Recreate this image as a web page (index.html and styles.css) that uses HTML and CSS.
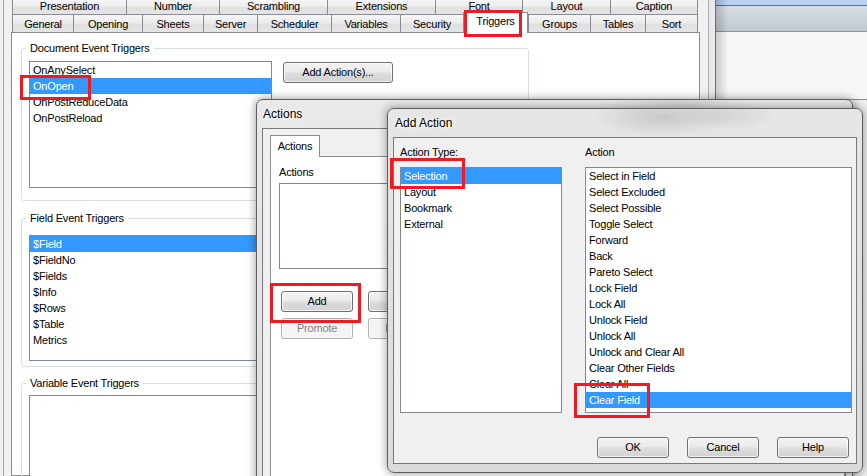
FILE: index.html
```html
<!DOCTYPE html>
<html>
<head>
<meta charset="utf-8">
<title>Triggers</title>
<link rel="stylesheet" href="styles.css">
</head>
<body>
<div class="desk">

  <div class="bgwin">
    <div class="bgwin-top"></div>
    <div class="bgwin-bar"></div>
    <div class="bgwin-body"></div>
  </div>

  <div class="props">
    <div class="tabrow row1">
      <div class="tab">Presentation</div>
      <div class="tab">Number</div>
      <div class="tab">Scrambling</div>
      <div class="tab">Extensions</div>
      <div class="tab">Font</div>
      <div class="tab">Layout</div>
      <div class="tab">Caption</div>
    </div>
    <div class="tabrow row2">
      <div class="tab">General</div>
      <div class="tab">Opening</div>
      <div class="tab">Sheets</div>
      <div class="tab">Server</div>
      <div class="tab">Scheduler</div>
      <div class="tab">Variables</div>
      <div class="tab">Security</div>
      <div class="tab sel">Triggers</div>
      <div class="tab">Groups</div>
      <div class="tab">Tables</div>
      <div class="tab">Sort</div>
    </div>
    <div class="page">
      <fieldset class="grp grp-doc">
        <legend>Document Event Triggers</legend>
        <div class="grp-row">
          <div class="list list-doc">
            <div>OnAnySelect</div>
            <div class="on">OnOpen</div>
            <div>OnPostReduceData</div>
            <div>OnPostReload</div>
          </div>
          <div class="btn btn-addactions">Add Action(s)...</div>
        </div>
      </fieldset>
      <fieldset class="grp grp-field">
        <legend>Field Event Triggers</legend>
        <div class="list list-field">
          <div class="on">$Field</div>
          <div>$FieldNo</div>
          <div>$Fields</div>
          <div>$Info</div>
          <div>$Rows</div>
          <div>$Table</div>
          <div>Metrics</div>
        </div>
      </fieldset>
      <fieldset class="grp grp-var">
        <legend>Variable Event Triggers</legend>
        <div class="list list-var"></div>
      </fieldset>
    </div>
  </div>

  <div class="win win-actions">
    <div class="wtitle">Actions</div>
    <div class="client client-actions">
      <div class="atab">Actions</div>
      <div class="apanel">
        <div class="lbl">Actions</div>
        <div class="list list-actions"></div>
        <div class="brow brow-first">
          <div class="btn abtn">Add</div>
          <div class="btn abtn">Delete</div>
        </div>
        <div class="brow">
          <div class="btn abtn dis">Promote</div>
          <div class="btn abtn dis">Demote</div>
        </div>
      </div>
    </div>
  </div>

  <div class="win win-add">
    <div class="wtitle">Add Action</div>
    <div class="client client-add">
      <div class="aa-cols">
        <div class="aa-col aa-type">
          <div class="lbl">Action Type:</div>
          <div class="list list-type">
            <div class="on">Selection</div>
            <div>Layout</div>
            <div>Bookmark</div>
            <div>External</div>
          </div>
        </div>
        <div class="aa-col aa-act">
          <div class="lbl">Action</div>
          <div class="list list-act">
            <div>Select in Field</div>
            <div>Select Excluded</div>
            <div>Select Possible</div>
            <div>Toggle Select</div>
            <div>Forward</div>
            <div>Back</div>
            <div>Pareto Select</div>
            <div>Lock Field</div>
            <div>Lock All</div>
            <div>Unlock Field</div>
            <div>Unlock All</div>
            <div>Unlock and Clear All</div>
            <div>Clear Other Fields</div>
            <div>Clear All</div>
            <div class="on">Clear Field</div>
          </div>
        </div>
      </div>
      <div class="aa-btns">
        <div class="btn dbtn">OK</div>
        <div class="btn dbtn">Cancel</div>
        <div class="btn dbtn">Help</div>
      </div>
    </div>
  </div>

  <div class="mark m-triggers"></div>
  <div class="mark m-onopen"></div>
  <div class="mark m-add"></div>
  <div class="mark m-selection"></div>
  <div class="mark m-clearfield"></div>
</div>
</body>
</html>
```
FILE: styles.css
```css
* { box-sizing: border-box; }
html, body { margin: 0; padding: 0; }
body {
  font-family: "Liberation Sans", Arial, sans-serif;
  font-size: 11px;
  letter-spacing: -0.2px;
  color: #000;
}
.desk {
  position: relative;
  width: 867px;
  height: 476px;
  overflow: hidden;
  background: #f0f0f0;
}

/* background window at top right */
.bgwin {
  position: absolute;
  left: 716px;
  top: 0;
  width: 151px;
  height: 100px;
  display: flex;
  flex-direction: column;
}
.bgwin::after {
  content: "";
  position: absolute;
  left: 0; top: 0; bottom: 0;
  width: 12px;
  background: linear-gradient(to right, rgba(0,0,0,0.18), rgba(0,0,0,0));
}
.bgwin-top { height: 6px; background: #b9d1f4; border-bottom: 1px solid #6c6c6c; }
.bgwin-bar { height: 26px; background: linear-gradient(#d6dde4, #c2c9d0); border-bottom: 1px solid #8f969c; }
.bgwin-body { flex: 1; background: #f7f7f7; border-bottom: 1px solid #8a8a8a; }

/* main properties dialog */
.props {
  position: absolute;
  left: 0;
  top: 0;
  width: 716px;
  height: 476px;
  padding-left: 11px;
  background: linear-gradient(to right,
    #f0f0f0 0 3px, #a3a3a3 3px 4px, #f0f0f0 4px 708px,
    #acacac 708px 709px, #e9e9e9 709px 715px, #6f6f6f 715px 716px);
}
.tabrow { display: grid; margin-left: 1px; }
.row1 { grid-template-columns: 114px 93px 108px 108px 87px 88px 88px; height: 15px; }
.row2 { grid-template-columns: 61px 69px 61px 54px 74px 69px 63px 65px 62px 55px 53px; height: 17px; }
.tab {
  border-left: 1px solid #898c95;
  background: linear-gradient(#f6f6f6, #ececec 45%, #e0e0e0 55%, #e4e4e4);
  text-align: center;
  white-space: nowrap;
  overflow: hidden;
}
.tab:last-child { border-right: 1px solid #898c95; }
.row1 .tab { border-bottom: 1px solid #898c95; line-height: 13px; }
.row2 .tab { line-height: 16px; padding-top: 1px; height: 17px; }
.row2 .tab.sel {
  position: relative;
  z-index: 2;
  align-self: start;
  margin-top: -3px;
  height: 21px;
  padding-top: 0;
  line-height: 17px;
  background: #fff;
  border: 1px solid #898c95;
  border-bottom: 0;
}
.page {
  width: 689px;
  height: 444px;
  border: 1px solid #898c95;
  background: #fff;
  padding: 8px 0 0 9px;
}

.grp {
  margin: 0;
  min-width: 0;
  width: 508px;
  border: 1px solid #d5dfe5;
  border-radius: 3px;
}
.grp legend {
  padding: 0 4px;
  margin-left: -3px;
  line-height: 14px;
}
.grp-doc { padding: 6px 0 12px 7px; }
.grp-field { margin-top: 10px; padding: 10px 0 5px 7px; }
.grp-var { margin-top: 9px; padding: 5px 0 0 7px; height: 120px; }
.grp-row { display: flex; align-items: flex-start; }

.list {
  border: 1px solid #828790;
  background: #fff;
  overflow: hidden;
}
.list > div {
  height: 16px;
  line-height: 16px;
  padding-left: 3px;
  white-space: nowrap;
}
.list > .on { background: #3399ff; color: #fff; }
.list-doc { width: 243px; height: 127px; }
.list-field { width: 243px; height: 126px; }
.list-var { width: 243px; height: 100px; }

.btn {
  height: 21px;
  line-height: 19px;
  text-align: center;
  white-space: nowrap;
  border: 1px solid #707070;
  border-radius: 3px;
  background: linear-gradient(#f3f3f3 0%, #ebebeb 48%, #dddddd 52%, #d2d2d2 100%);
  box-shadow: inset 0 0 0 1px rgba(255,255,255,0.7);
}
.btn.dis {
  border-color: #adb2b5;
  background: #f4f4f4;
  color: #838383;
}
.btn-addactions { width: 110px; margin: 1px 0 0 11px; }

/* windows */
.win {
  position: absolute;
  border: 1px solid #5e5e5e;
  border-radius: 7px 7px 4px 4px;
  box-shadow: 0 0 9px 1px rgba(0,0,0,0.35);
}
.wtitle {
  height: 28px;
  line-height: 29px;
  font-size: 12px;
  letter-spacing: 0;
  text-shadow: 0 0 6px #fff, 0 0 6px #fff;
  white-space: nowrap;
}
.client {
  border: 1px solid #7a7a7a;
  background: #f0f0f0;
}

.win-actions {
  left: 256px;
  top: 99px;
  width: 597px;
  height: 400px;
  padding: 0 6px 0 5px;
  background:
    radial-gradient(80px 16px at 420px 5px, rgba(120,120,120,0.22), rgba(120,120,120,0)),
    linear-gradient(#e9e9e9, #dfdfdf);
}
.win-actions .wtitle { padding-left: 1px; }
.client-actions { height: 400px; padding: 6px 0 0 7px; }
.atab {
  position: relative;
  z-index: 1;
  width: 50px;
  height: 22px;
  margin-bottom: -1px;
  line-height: 20px;
  text-align: center;
  background: #fff;
  border: 1px solid #898c95;
  border-bottom: 0;
}
.apanel {
  height: 400px;
  border: 1px solid #898c95;
  background: #fff;
  padding: 7px 0 0 8px;
}
.lbl { height: 16px; line-height: 16px; white-space: nowrap; }
.list-actions { width: 300px; height: 86px; margin-top: 3px; }
.brow { display: flex; gap: 15px; margin: 6px 0 0 2px; }
.brow-first { margin-top: 22px; }
.abtn { width: 72px; }

.win-add {
  left: 387px;
  top: 108px;
  width: 476px;
  height: 365px;
  padding: 0 5px 8px 5px;
  border-radius: 7px;
  background:
    radial-gradient(70px 20px at 275px 8px, rgba(110,110,110,0.25), rgba(110,110,110,0)),
    radial-gradient(50px 16px at 340px 6px, rgba(120,120,120,0.15), rgba(120,120,120,0)),
    linear-gradient(#e6e6e6, #dadada);
}
.win-add .wtitle { padding-left: 2px; }
.client-add { height: 327px; padding: 6px 0 0 6px; }
.aa-cols { display: flex; gap: 23px; }
.aa-type { width: 162px; }
.aa-act { width: 267px; }
.list-type, .list-act { height: 246px; margin-top: 7px; }
.aa-btns {
  display: flex;
  justify-content: flex-end;
  gap: 18px;
  margin-top: 24px;
  padding-right: 7px;
}
.dbtn { width: 72px; }

/* red annotation boxes */
.mark {
  position: absolute;
  z-index: 10;
  border: 3px solid #ed1c24;
}
.m-triggers { left: 464px; top: 10px; width: 58px; height: 27px; }
.m-onopen { left: 20px; top: 75px; width: 71px; height: 25px; }
.m-add { left: 270px; top: 283px; width: 91px; height: 40px; }
.m-selection { left: 390px; top: 158px; width: 75px; height: 31px; }
.m-clearfield { left: 574px; top: 383px; width: 76px; height: 35px; }
```
